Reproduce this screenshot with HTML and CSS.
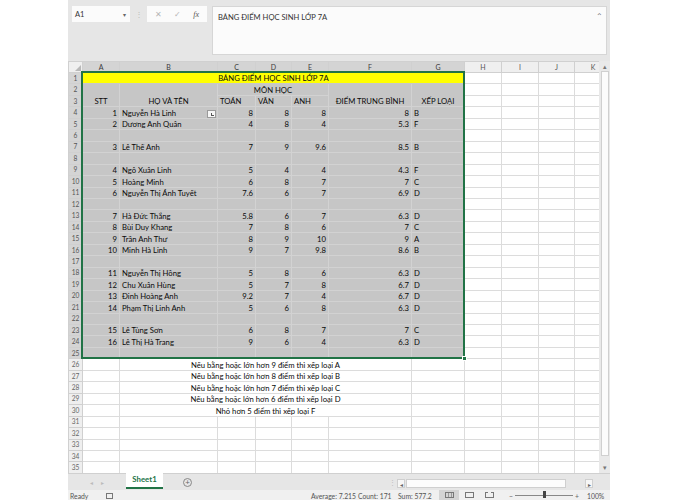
FILE: index.html
```html
<!DOCTYPE html>
<html lang="vi">
<head>
<meta charset="utf-8">
<link rel="stylesheet" href="styles.css">
</head>
<body>
<div class="app">
  <div class="formula">
    <div class="namebox"><span>A1</span><span class="caret">▾</span></div>
    <div class="dots">⋮</div>
    <div class="fxbox"><span class="ico">✕</span><span class="ico">✓</span><span class="fx">fx</span></div>
    <div class="finput"><span>BẢNG ĐIỂM HỌC SINH LỚP 7A</span><span class="collapse">⌃</span></div>
  </div>
  <div class="sheet">
    <div class="grid">
      <table>
        <colgroup>
          <col class="c-rh"><col class="c-a"><col class="c-b"><col class="c-c"><col class="c-d"><col class="c-e"><col class="c-f"><col class="c-g"><col class="c-h"><col class="c-i"><col class="c-j"><col class="c-k">
        </colgroup>
        <tr class="hdr">
          <th class="corner"><span class="tri"></span></th>
          <th class="ch on">A</th><th class="ch on">B</th><th class="ch on">C</th><th class="ch on">D</th><th class="ch on">E</th><th class="ch on">F</th><th class="ch on">G</th><th class="ch">H</th><th class="ch">I</th><th class="ch">J</th><th class="ch">K</th>
        </tr>
        <tr class="sel"><th class="rh">1</th><td class="title c" colspan="7">BẢNG ĐIỂM HỌC SINH LỚP 7A</td><td></td><td></td><td></td><td></td></tr>
        <tr class="sel"><th class="rh">2</th><td class="c" rowspan="2">STT</td><td class="c" rowspan="2">HỌ VÀ TÊN</td><td class="c" colspan="3">MÔN HỌC</td><td class="c" rowspan="2">ĐIỂM TRUNG BÌNH</td><td class="c" rowspan="2">XẾP LOẠI</td><td></td><td></td><td></td><td></td></tr>
        <tr class="sel"><th class="rh">3</th><td>TOÁN</td><td>VĂN</td><td>ANH</td><td></td><td></td><td></td><td></td></tr>
        <tr class="sel"><th class="rh">4</th><td class="n">1</td><td>Nguyễn Hà Linh</td><td class="n">8</td><td class="n">8</td><td class="n">8</td><td class="n">8</td><td>B</td><td></td><td></td><td></td><td></td></tr>
        <tr class="sel"><th class="rh">5</th><td class="n">2</td><td>Dương Anh Quân</td><td class="n">4</td><td class="n">8</td><td class="n">4</td><td class="n">5.3</td><td>F</td><td></td><td></td><td></td><td></td></tr>
        <tr class="sel"><th class="rh">6</th><td></td><td></td><td></td><td></td><td></td><td></td><td></td><td></td><td></td><td></td><td></td></tr>
        <tr class="sel"><th class="rh">7</th><td class="n">3</td><td>Lê Thế Anh</td><td class="n">7</td><td class="n">9</td><td class="n">9.6</td><td class="n">8.5</td><td>B</td><td></td><td></td><td></td><td></td></tr>
        <tr class="sel"><th class="rh">8</th><td></td><td></td><td></td><td></td><td></td><td></td><td></td><td></td><td></td><td></td><td></td></tr>
        <tr class="sel"><th class="rh">9</th><td class="n">4</td><td>Ngô Xuân Linh</td><td class="n">5</td><td class="n">4</td><td class="n">4</td><td class="n">4.3</td><td>F</td><td></td><td></td><td></td><td></td></tr>
        <tr class="sel"><th class="rh">10</th><td class="n">5</td><td>Hoàng Minh</td><td class="n">6</td><td class="n">8</td><td class="n">7</td><td class="n">7</td><td>C</td><td></td><td></td><td></td><td></td></tr>
        <tr class="sel"><th class="rh">11</th><td class="n">6</td><td>Nguyễn Thị Ánh Tuyết</td><td class="n">7.6</td><td class="n">6</td><td class="n">7</td><td class="n">6.9</td><td>D</td><td></td><td></td><td></td><td></td></tr>
        <tr class="sel"><th class="rh">12</th><td></td><td></td><td></td><td></td><td></td><td></td><td></td><td></td><td></td><td></td><td></td></tr>
        <tr class="sel"><th class="rh">13</th><td class="n">7</td><td>Hà Đức Thắng</td><td class="n">5.8</td><td class="n">6</td><td class="n">7</td><td class="n">6.3</td><td>D</td><td></td><td></td><td></td><td></td></tr>
        <tr class="sel"><th class="rh">14</th><td class="n">8</td><td>Bùi Duy Khang</td><td class="n">7</td><td class="n">8</td><td class="n">6</td><td class="n">7</td><td>C</td><td></td><td></td><td></td><td></td></tr>
        <tr class="sel"><th class="rh">15</th><td class="n">9</td><td>Trần Anh Thư</td><td class="n">8</td><td class="n">9</td><td class="n">10</td><td class="n">9</td><td>A</td><td></td><td></td><td></td><td></td></tr>
        <tr class="sel"><th class="rh">16</th><td class="n">10</td><td>Minh Hà Linh</td><td class="n">9</td><td class="n">7</td><td class="n">9.8</td><td class="n">8.6</td><td>B</td><td></td><td></td><td></td><td></td></tr>
        <tr class="sel"><th class="rh">17</th><td></td><td></td><td></td><td></td><td></td><td></td><td></td><td></td><td></td><td></td><td></td></tr>
        <tr class="sel"><th class="rh">18</th><td class="n">11</td><td>Nguyễn Thị Hồng</td><td class="n">5</td><td class="n">8</td><td class="n">6</td><td class="n">6.3</td><td>D</td><td></td><td></td><td></td><td></td></tr>
        <tr class="sel"><th class="rh">19</th><td class="n">12</td><td>Chu Xuân Hùng</td><td class="n">5</td><td class="n">7</td><td class="n">8</td><td class="n">6.7</td><td>D</td><td></td><td></td><td></td><td></td></tr>
        <tr class="sel"><th class="rh">20</th><td class="n">13</td><td>Đinh Hoàng Anh</td><td class="n">9.2</td><td class="n">7</td><td class="n">4</td><td class="n">6.7</td><td>D</td><td></td><td></td><td></td><td></td></tr>
        <tr class="sel"><th class="rh">21</th><td class="n">14</td><td>Phạm Thị Linh Anh</td><td class="n">5</td><td class="n">6</td><td class="n">8</td><td class="n">6.3</td><td>D</td><td></td><td></td><td></td><td></td></tr>
        <tr class="sel"><th class="rh">22</th><td></td><td></td><td></td><td></td><td></td><td></td><td></td><td></td><td></td><td></td><td></td></tr>
        <tr class="sel"><th class="rh">23</th><td class="n">15</td><td>Lê Tùng Sơn</td><td class="n">6</td><td class="n">8</td><td class="n">7</td><td class="n">7</td><td>C</td><td></td><td></td><td></td><td></td></tr>
        <tr class="sel"><th class="rh">24</th><td class="n">16</td><td>Lê Thị Hà Trang</td><td class="n">9</td><td class="n">6</td><td class="n">4</td><td class="n">6.3</td><td>D</td><td></td><td></td><td></td><td></td></tr>
        <tr class="sel"><th class="rh">25</th><td></td><td></td><td></td><td></td><td></td><td></td><td></td><td></td><td></td><td></td><td></td></tr>
        <tr><th class="rh">26</th><td></td><td class="c" colspan="5">Nếu bằng hoặc lớn hơn 9 điểm thì xếp loại A</td><td></td><td></td><td></td><td></td><td></td></tr>
        <tr><th class="rh">27</th><td></td><td class="c" colspan="5">Nếu bằng hoặc lớn hơn 8 điểm thì xếp loại B</td><td></td><td></td><td></td><td></td><td></td></tr>
        <tr><th class="rh">28</th><td></td><td class="c" colspan="5">Nếu bằng hoặc lớn hơn 7 điểm thì xếp loại C</td><td></td><td></td><td></td><td></td><td></td></tr>
        <tr><th class="rh">29</th><td></td><td class="c" colspan="5">Nếu bằng hoặc lớn hơn 6 điểm thì xếp loại D</td><td></td><td></td><td></td><td></td><td></td></tr>
        <tr><th class="rh">30</th><td></td><td class="c" colspan="5">Nhỏ hơn 5 điểm thì xếp loại F</td><td></td><td></td><td></td><td></td><td></td></tr>
        <tr><th class="rh">31</th><td></td><td></td><td></td><td></td><td></td><td></td><td></td><td></td><td></td><td></td><td></td></tr>
        <tr><th class="rh">32</th><td></td><td></td><td></td><td></td><td></td><td></td><td></td><td></td><td></td><td></td><td></td></tr>
        <tr><th class="rh">33</th><td></td><td></td><td></td><td></td><td></td><td></td><td></td><td></td><td></td><td></td><td></td></tr>
        <tr><th class="rh">34</th><td></td><td></td><td></td><td></td><td></td><td></td><td></td><td></td><td></td><td></td><td></td></tr>
        <tr><th class="rh">35</th><td></td><td></td><td></td><td></td><td></td><td></td><td></td><td></td><td></td><td></td><td></td></tr>
      </table>
      <div class="selbox"><span class="handle"></span></div>
      <div class="paste"><span class="pglyph"></span></div>
    </div>
    <div class="vscroll">
      <span class="arrow">▴</span>
      <span class="vthumb"></span>
      <span class="vtrack"></span>
      <span class="arrow">▾</span>
    </div>
  </div>
  <div class="tabbar">
    <div class="nav"><span>◂</span><span>▸</span></div>
    <div class="tab">Sheet1</div>
    <div class="addtab">+</div>
    <div class="hdots">⋮</div>
    <div class="hscroll">
      <span class="harrow">◂</span>
      <span class="hthumb"></span>
      <span class="htrack"></span>
      <span class="harrow">▸</span>
    </div>
  </div>
  <div class="status">
    <span class="ready">Ready</span>
    <span class="macro"></span>
    <span class="stat avg">Average: 7.215</span>
    <span class="stat cnt">Count: 171</span>
    <span class="stat sum">Sum: 577.2</span>
    <span class="views">
      <span class="view active"><span class="vi grid-ico"></span></span>
      <span class="view"><span class="vi page-ico"></span></span>
      <span class="view"><span class="vi break-ico"></span></span>
    </span>
    <span class="zoom"><span class="zm">−</span><span class="slider"><span class="knob"></span></span><span class="zm">+</span><span class="pct">100%</span></span>
  </div>
</div>
</body>
</html>
```

FILE: styles.css
```css
* { box-sizing: border-box; }
body {
  margin: 0;
  background: #ffffff;
  font-family: Lato, "Noto Sans", sans-serif;
  color: #222;
}
.app {
  margin-left: 68px;
  width: 542px;
  height: 500px;
  background: #e6e6e6;
  display: flex;
  flex-direction: column;
  overflow: hidden;
}

/* formula bar */
.formula {
  height: 61px;
  flex: none;
  display: flex;
  align-items: flex-start;
  padding: 6px 0 0 4px;
}
.namebox {
  width: 58px;
  height: 16px;
  background: #fbfbfb;
  display: flex;
  align-items: center;
  justify-content: space-between;
  padding: 0 4px 0 3px;
  font-size: 7.5px;
  color: #333;
}
.caret { font-size: 6px; color: #666; }
.dots {
  width: 17px;
  text-align: center;
  font-size: 8px;
  line-height: 16px;
  color: #bbb;
}
.fxbox {
  width: 60px;
  height: 16px;
  background: #fbfbfb;
  display: flex;
  align-items: center;
  justify-content: space-around;
  padding: 0 2px;
}
.ico { font-size: 8px; color: #b5b5b5; }
.fx { font-family: "Liberation Serif", serif; font-style: italic; font-size: 8px; color: #555; }
.finput {
  margin-left: 5px;
  width: 395px;
  height: 49px;
  background: #fbfbfb;
  border: 1px solid #d6d6d6;
  display: flex;
  justify-content: space-between;
  padding: 5px 3px 0 5px;
  font-size: 7.6px;
  color: #333;
}
.collapse { font-size: 8px; line-height: 8px; color: #777; }

/* sheet */
.sheet {
  height: 412px;
  flex: none;
  display: flex;
}
.grid {
  width: 531px;
  height: 412px;
  position: relative;
  overflow: hidden;
  background: #fff;
}
table {
  border-collapse: collapse;
  table-layout: fixed;
  width: 543px;
  font-size: 7.7px;
  color: #0a0a0a;
}
.c-rh { width: 14px; }
.c-a { width: 37px; }
.c-b { width: 98px; }
.c-c { width: 38px; }
.c-d { width: 36px; }
.c-e { width: 37px; }
.c-f { width: 83px; }
.c-g { width: 53px; }
.c-h { width: 37px; }
.c-i { width: 37px; }
.c-j { width: 36px; }
.c-k { width: 37px; }
tr { height: 11.46px; }
tr.hdr { height: 11px; }
td, th {
  padding: 0 2px;
  border: 1px solid #dcdcdc;
  white-space: nowrap;
  overflow: hidden;
  line-height: 9px;
  vertical-align: bottom;
  text-align: left;
  font-weight: normal;
}
td.n { text-align: right; }
td.c { text-align: center; }
tr.sel td { background: #c6c6c6; border-color: #d2d2d2; }
tr.sel td:nth-last-child(-n+4) { background: #fff; border-color: #dcdcdc; }
tr.sel td.title { background: #ffff00; border-color: #c8c8c8; }
.hdr th {
  background: #efefef;
  color: #555;
  text-align: center;
  vertical-align: middle;
  border-color: #d0d0d0;
  font-size: 7px;
}
.hdr th.on {
  background: #d4d4d4;
  color: #3a3a3a;
  border-bottom: 1px solid #217346;
}
.corner { position: relative; }
.tri {
  position: absolute;
  right: 1px;
  bottom: 1px;
  width: 0;
  height: 0;
  border-left: 6px solid transparent;
  border-bottom: 6px solid #b8b8b8;
}
th.rh {
  background: #efefef;
  color: #666;
  font-size: 6.6px;
  text-align: center;
  vertical-align: middle;
  padding: 0;
  border-color: #d0d0d0;
}
tr.sel th.rh {
  background: #d4d4d4;
  color: #555;
  border-right: 1px solid #217346;
}
.selbox {
  position: absolute;
  left: 13px;
  top: 10px;
  width: 384px;
  height: 288px;
  border: 2px solid #217346;
  pointer-events: none;
}
.handle {
  position: absolute;
  right: -4px;
  bottom: -4px;
  width: 5px;
  height: 5px;
  background: #217346;
  border: 1px solid #fff;
}
.paste {
  position: absolute;
  left: 139px;
  top: 49px;
  width: 9px;
  height: 8px;
  background: #f6f6f6;
  border: 1px solid #9a9a9a;
}
.pglyph {
  position: absolute;
  left: 3px;
  top: 2px;
  width: 3px;
  height: 3px;
  border-left: 1px solid #555;
  border-bottom: 1px solid #555;
}

/* vertical scroll */
.vscroll {
  width: 11px;
  height: 412px;
  background: #e9e9e9;
  display: flex;
  flex-direction: column;
  align-items: center;
  padding: 1px 1px;
}
.arrow {
  height: 9px;
  font-size: 7px;
  line-height: 9px;
  color: #777;
}
.vthumb {
  width: 8px;
  height: 385px;
  background: #fcfcfc;
  border: 1px solid #d0d0d0;
}
.vtrack { flex: 1; }

/* tabs */
.tabbar {
  height: 17px;
  flex: none;
  display: flex;
  align-items: stretch;
  background: #e6e6e6;
  border-top: 1px solid #d0d0d0;
}
.nav {
  width: 58px;
  display: flex;
  gap: 8px;
  justify-content: center;
  align-items: center;
  font-size: 6px;
  color: #bbb;
}
.tab {
  width: 37px;
  background: #fff;
  color: #217346;
  font-weight: bold;
  font-size: 7.8px;
  text-align: center;
  line-height: 13px;
  border-bottom: 2px solid #217346;
  height: 16px;
  margin-top: -1px;
}
.addtab {
  margin-left: 20px;
  width: 9px;
  height: 9px;
  align-self: center;
  border: 1px solid #888;
  border-radius: 50%;
  font-size: 8px;
  line-height: 7px;
  text-align: center;
  color: #666;
}
.hdots {
  margin-left: 195px;
  width: 10px;
  text-align: center;
  font-size: 7px;
  line-height: 16px;
  color: #bbb;
}
.hscroll {
  width: 196px;
  height: 9px;
  align-self: center;
  margin-top: 2px;
  display: flex;
  align-items: center;
  gap: 1px;
}
.harrow {
  width: 8px;
  height: 9px;
  font-size: 6px;
  line-height: 9px;
  text-align: center;
  color: #666;
  background: #f6f6f6;
  border: 1px solid #cfcfcf;
}
.hthumb {
  width: 160px;
  height: 9px;
  background: #fcfcfc;
  border: 1px solid #cfcfcf;
}
.htrack { flex: 1; }

/* status */
.status {
  height: 10px;
  flex: none;
  background: #f0f0f0;
  display: flex;
  align-items: flex-start;
  font-size: 6.8px;
  color: #555;
  line-height: 8px;
  padding-left: 2px;
  padding-top: 2px;
  white-space: nowrap;
}
.ready { width: 36px; }
.macro {
  width: 7px;
  height: 6px;
  margin-top: 1px;
  border: 1px solid #777;
}
.stat { flex: none; }
.avg { margin-left: 198px; width: 47px; }
.cnt { width: 40px; }
.sum { width: 41px; }
.views { display: flex; margin-top: -2px; }
.view {
  width: 20px;
  height: 10px;
  display: flex;
  justify-content: center;
  padding-top: 2px;
}
.view.active { background: #d4d4d4; }
.vi {
  width: 9px;
  height: 6px;
  border: 1px solid #777;
}
.grid-ico { background: repeating-linear-gradient(90deg, transparent 0 2px, #999 2px 3px); }
.break-ico { border-top-style: dashed; }
.zoom {
  display: flex;
  align-items: flex-start;
  margin-left: 8px;
}
.zm { width: 8px; text-align: center; color: #666; }
.slider {
  width: 58px;
  height: 4px;
  border-bottom: 1px solid #888;
  position: relative;
}
.knob {
  position: absolute;
  left: 28px;
  top: -1px;
  width: 3px;
  height: 7px;
  background: #444;
}
.pct { margin-left: 6px; }
```
